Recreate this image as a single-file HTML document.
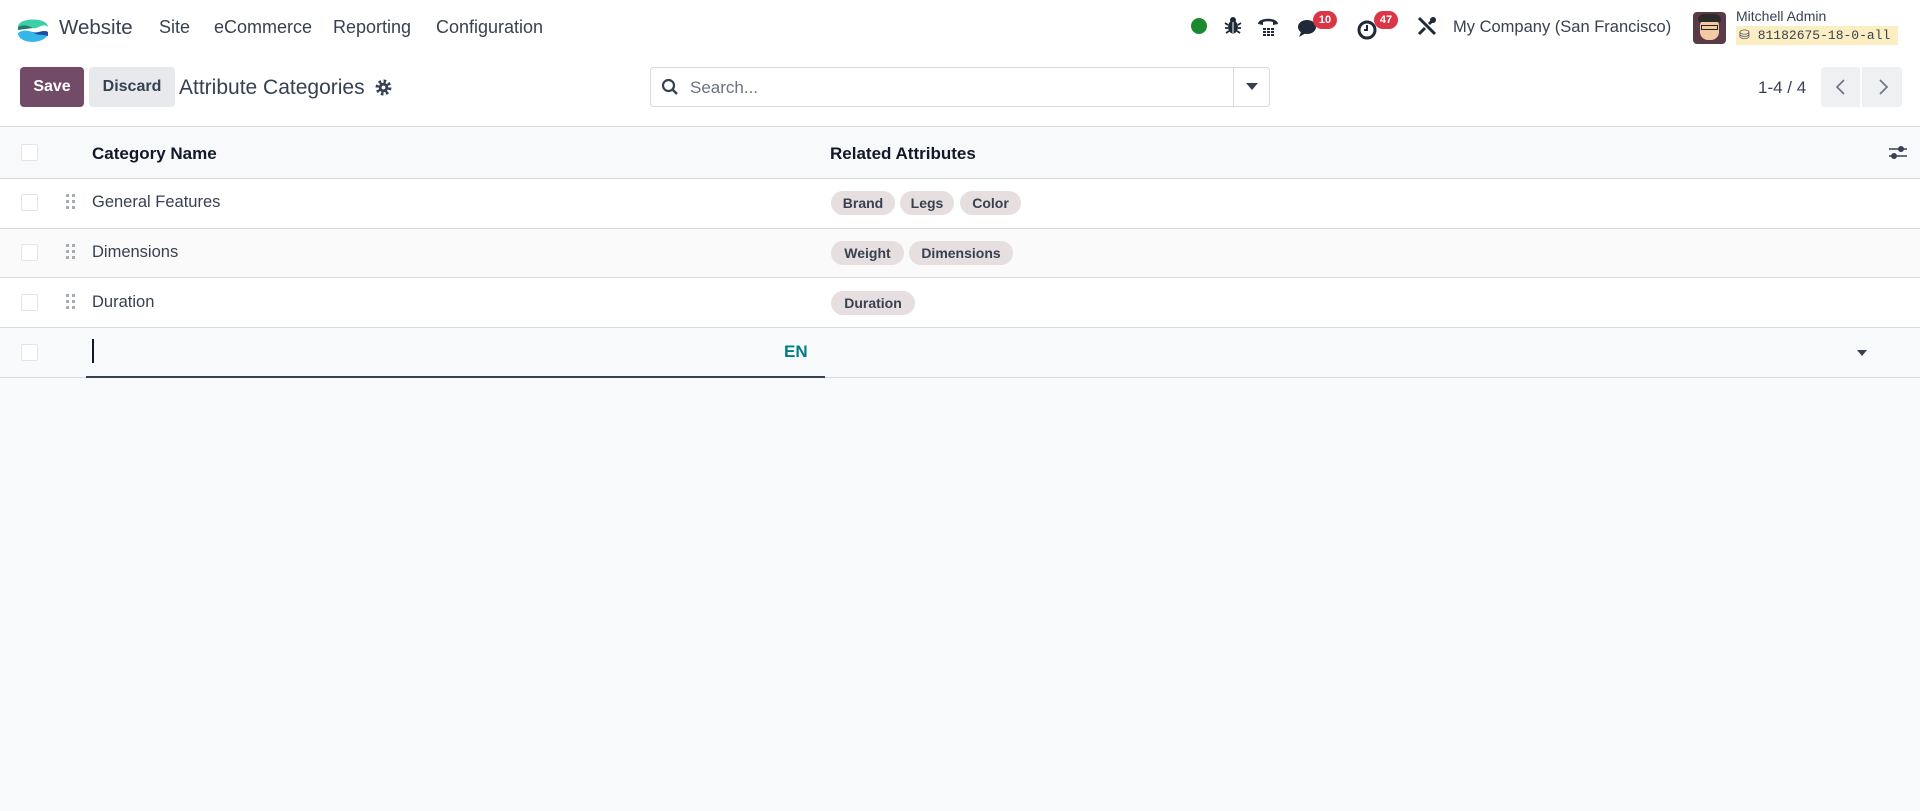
<!DOCTYPE html>
<html><head><meta charset="utf-8"><style>
*{box-sizing:border-box;margin:0;padding:0}
body{width:1920px;height:811px;background:#f9fafb;font-family:"Liberation Sans",sans-serif;color:#374151;position:relative;overflow:hidden}
.a{position:absolute;white-space:nowrap}
.nav{left:0;top:0;width:1920px;height:57px;background:#fff}
.menu{top:17px;font-size:18px;color:#374151}
.cp{left:0;top:57px;width:1920px;height:70px;background:#fff;border-bottom:1px solid #d8dadd}
.btn{top:67px;height:40px;border-radius:4px;font-size:16px;font-weight:bold;display:flex;align-items:center;justify-content:center}
.row{left:0;width:1920px;border-bottom:1px solid #d8dadd}
.cb{left:21px;width:17px;height:17px;border:1px solid #e3e5e8;border-radius:2px;background:#fff}
.nm{left:92px;font-size:16.5px;color:#374151}
.tag{height:24px;border-radius:12px;background:#e7dfdf;font-size:14px;font-weight:bold;color:#374151;display:flex;align-items:center;justify-content:center}
.dh{left:66px;width:10px;height:16px}
.badge{background:#dc3545;color:#fff;font-size:11px;font-weight:bold;border-radius:9px;height:18px;min-width:24px;display:flex;align-items:center;justify-content:center}
</style></head><body>
<div class="a nav"></div>
<svg class="a" style="left:15px;top:12px" width="36" height="36" viewBox="0 0 36 36"><path d="M3 15 C3 5 33 5 33 15 C28 10 22 18 18 16 C13 13 8 12 3 15Z" fill="#3ecfa9"/><path d="M3 15 C8 12 13 13 18 16 L3 18Z" fill="#1f7a6d"/><path d="M3 21 C8 17 14 19 18 20 C23 22 28 17 33 20 C33 33 3 33 3 21Z" fill="#35b6ea"/><path d="M18 20 C23 22 28 17 33 20 L33 24 C27 22 22 24 18 20Z" fill="#1d4f9c"/></svg>
<div class="a" style="left:59px;top:16px;font-size:20.5px;color:#374151">Website</div>
<div class="a menu" style="left:159px">Site</div>
<div class="a menu" style="left:214px">eCommerce</div>
<div class="a menu" style="left:333px">Reporting</div>
<div class="a menu" style="left:436px">Configuration</div>
<div class="a" style="left:1191px;top:18px;width:16px;height:16px;border-radius:50%;background:#1a8a2e"></div>
<svg class="a" style="left:1224px;top:15px" width="18" height="20" viewBox="0 0 18 20"><ellipse cx="9" cy="12" rx="5" ry="6.5" fill="#1f2937"/><circle cx="9" cy="5" r="3" fill="#1f2937"/><path d="M1 8 L4 10 M17 8 L14 10 M1 13 H4 M17 13 H14 M2 18 L5 16 M16 18 L13 16" stroke="#1f2937" stroke-width="1.8"/><path d="M9 7 V18" stroke="#fff" stroke-width="1"/></svg>
<svg class="a" style="left:1256px;top:16px" width="24" height="22" viewBox="0 0 24 22"><path d="M2 8 C2 1 22 1 22 8 L17 9 L17 6 C14 5 10 5 7 6 L7 9Z" fill="#1f2937"/><g fill="#1f2937"><rect x="7" y="12" width="3" height="2"/><rect x="11" y="12" width="3" height="2"/><rect x="15" y="12" width="3" height="2"/><rect x="7" y="15" width="3" height="2"/><rect x="11" y="15" width="3" height="2"/><rect x="15" y="15" width="3" height="2"/><rect x="7" y="18" width="3" height="2"/><rect x="11" y="18" width="3" height="2"/><rect x="15" y="18" width="3" height="2"/></g></svg>
<svg class="a" style="left:1297px;top:18px" width="24" height="22" viewBox="0 0 24 22"><ellipse cx="10" cy="9" rx="9" ry="7" fill="#1f2937"/><path d="M4 14 L2 19 L9 15Z" fill="#1f2937"/></svg>
<div class="a badge" style="left:1313px;top:11px">10</div>
<svg class="a" style="left:1356px;top:18px" width="24" height="24" viewBox="0 0 24 24"><circle cx="11" cy="12" r="8" fill="none" stroke="#1f2937" stroke-width="3"/><path d="M11 7 V12 H8" stroke="#1f2937" stroke-width="2" fill="none"/></svg>
<div class="a badge" style="left:1374px;top:11px">47</div>
<svg class="a" style="left:1416px;top:15px" width="22" height="22" viewBox="0 0 22 22"><path d="M3 3 L19 19 M19 3 L13 9 M3 19 L9 13" stroke="#1f2937" stroke-width="3"/><circle cx="17" cy="5" r="3" fill="#1f2937"/></svg>
<div class="a" style="left:1453px;top:18px;font-size:16.5px;color:#374151">My Company (San Francisco)</div>
<div class="a" style="left:1693px;top:12px;width:33px;height:32px;border-radius:4px;background:#5b3a47;overflow:hidden"><div style="position:absolute;left:7px;top:6px;width:19px;height:22px;border-radius:8px;background:#f3c9a4"></div><div style="position:absolute;left:5px;top:2px;width:23px;height:8px;border-radius:6px 6px 2px 2px;background:#2b2b2b"></div><div style="position:absolute;left:8px;top:13px;width:17px;height:5px;border:1.5px solid #222"></div></div>
<div class="a" style="left:1736px;top:8px;font-size:14px;color:#374151">Mitchell Admin</div>
<div class="a" style="left:1736px;top:26px;width:162px;height:19px;background:#fbeec3;font-family:'Liberation Mono',monospace;font-size:13px;color:#374151;padding-left:3px;line-height:19px">⛁ 81182675-18-0-all</div>

<div class="a cp"></div>
<div class="a btn" style="left:20px;width:64px;background:#714b67;color:#fff">Save</div>
<div class="a btn" style="left:89px;width:86px;background:#e7e9ed;color:#374151">Discard</div>
<div class="a" style="left:179px;top:76px;font-size:21px;color:#374151">Attribute Categories</div>
<svg class="a" style="left:375px;top:79px" width="17" height="17" viewBox="0 0 16 16"><circle cx="8" cy="8" r="5.5" fill="none" stroke="#374151" stroke-width="4" stroke-dasharray="2.2 2.1"/><circle cx="8" cy="8" r="4.5" fill="#374151"/><circle cx="8" cy="8" r="1.8" fill="#fff"/></svg>
<div class="a" style="left:650px;top:67px;width:620px;height:40px;border:1px solid #d8dadd;border-radius:4px;background:#fff"></div>
<div class="a" style="left:1233px;top:68px;width:1px;height:38px;background:#d8dadd"></div>
<svg class="a" style="left:661px;top:78px" width="18" height="18" viewBox="0 0 18 18"><circle cx="7.5" cy="7.5" r="5.5" fill="none" stroke="#374151" stroke-width="2.2"/><path d="M11.5 11.5 L16 16" stroke="#374151" stroke-width="2.4"/></svg>
<div class="a" style="left:690px;top:78px;font-size:17px;color:#6b7280">Search...</div>
<div class="a" style="left:1246px;top:83px;width:0;height:0;border-left:6px solid transparent;border-right:6px solid transparent;border-top:7px solid #374151"></div>
<div class="a" style="left:1758px;top:78px;font-size:17px;color:#374151">1-4 / 4</div>
<div class="a" style="left:1821px;top:67px;width:39px;height:40px;background:#eef0f2;border-radius:4px 0 0 4px"></div>
<div class="a" style="left:1862px;top:67px;width:40px;height:40px;background:#eef0f2;border-radius:0 4px 4px 0"></div>
<svg class="a" style="left:1834px;top:78px" width="14" height="18"><path d="M10 2 L3 9 L10 16" stroke="#6b7280" stroke-width="1.6" fill="none"/></svg>
<svg class="a" style="left:1876px;top:78px" width="14" height="18"><path d="M4 2 L11 9 L4 16" stroke="#6b7280" stroke-width="1.6" fill="none"/></svg>

<div class="a row" style="top:127px;height:52px;background:#f8f9fa"></div>
<div class="a row" style="top:179px;height:50px;background:#fff"></div>
<div class="a row" style="top:229px;height:49px;background:#fafafa"></div>
<div class="a row" style="top:278px;height:50px;background:#fff"></div>
<div class="a row" style="top:328px;height:50px;background:#f9fafb"></div>
<div class="a cb" style="top:144px"></div>
<div class="a cb" style="top:194px"></div>
<div class="a cb" style="top:244px"></div>
<div class="a cb" style="top:294px"></div>
<div class="a cb" style="top:344px"></div>
<div class="a" style="left:92px;top:144px;font-size:17px;font-weight:bold;color:#111827">Category Name</div>
<div class="a" style="left:830px;top:144px;font-size:17px;font-weight:bold;color:#111827">Related Attributes</div>
<svg class="a" style="left:1888px;top:144px" width="20" height="18"><path d="M1 5 H19 M1 12 H19" stroke="#374151" stroke-width="1.5"/><circle cx="13" cy="5" r="3" fill="#374151"/><circle cx="6" cy="12" r="3" fill="#374151"/></svg>
<svg class="a dh" style="top:194px" viewBox="0 0 10 16"><g fill="#a8adb5"><rect x="0" y="0" width="3" height="3"/><rect x="6" y="0" width="3" height="3"/><rect x="0" y="6" width="3" height="3"/><rect x="6" y="6" width="3" height="3"/><rect x="0" y="12" width="3" height="3"/><rect x="6" y="12" width="3" height="3"/></g></svg>
<svg class="a dh" style="top:244px" viewBox="0 0 10 16"><g fill="#a8adb5"><rect x="0" y="0" width="3" height="3"/><rect x="6" y="0" width="3" height="3"/><rect x="0" y="6" width="3" height="3"/><rect x="6" y="6" width="3" height="3"/><rect x="0" y="12" width="3" height="3"/><rect x="6" y="12" width="3" height="3"/></g></svg>
<svg class="a dh" style="top:294px" viewBox="0 0 10 16"><g fill="#a8adb5"><rect x="0" y="0" width="3" height="3"/><rect x="6" y="0" width="3" height="3"/><rect x="0" y="6" width="3" height="3"/><rect x="6" y="6" width="3" height="3"/><rect x="0" y="12" width="3" height="3"/><rect x="6" y="12" width="3" height="3"/></g></svg>
<div class="a nm" style="top:193px">General Features</div>
<div class="a nm" style="top:243px">Dimensions</div>
<div class="a nm" style="top:293px">Duration</div>
<div class="a tag" style="left:831px;top:191px;width:64px">Brand</div>
<div class="a tag" style="left:900px;top:191px;width:54px">Legs</div>
<div class="a tag" style="left:960px;top:191px;width:61px">Color</div>
<div class="a tag" style="left:831px;top:241px;width:73px">Weight</div>
<div class="a tag" style="left:909px;top:241px;width:104px">Dimensions</div>
<div class="a tag" style="left:831px;top:291px;width:84px">Duration</div>
<div class="a" style="left:92px;top:339px;width:2px;height:24px;background:#111827"></div>
<div class="a" style="left:784px;top:342px;font-size:17px;font-weight:bold;color:#017e84">EN</div>
<div class="a" style="left:86px;top:376px;width:739px;height:2px;background:#374151"></div>
<div class="a" style="left:1857px;top:350px;width:0;height:0;border-left:5px solid transparent;border-right:5px solid transparent;border-top:6px solid #374151"></div>
</body></html>
